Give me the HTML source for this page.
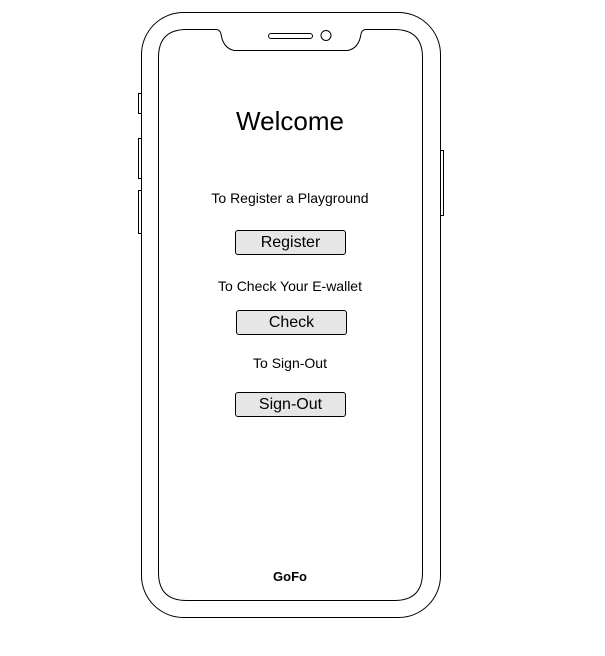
<!DOCTYPE html>
<html><head><meta charset="utf-8"><style>
html,body{margin:0;padding:0;background:#fff;width:605px;height:656px;overflow:hidden;font-family:"Liberation Sans",Arial,sans-serif}
.t{position:absolute;left:0;width:580px;text-align:center;color:#000}
.b{position:absolute;width:111px;height:25px;background:#e6e6e6;border:1px solid #000;border-radius:3px;box-sizing:border-box;text-align:center;font-size:16px;line-height:23px}
</style></head><body>
<svg width="605" height="656" style="position:absolute;left:0;top:0" fill="none" stroke="#000" stroke-width="1">
<path d="M141.5 93.5h-3v20h3M141.5 138.5h-3v40h3M141.5 190.5h-3v43h3M440.5 150.5h3v65h-3"/>
<rect x="141.5" y="12.5" width="299" height="605" rx="42"/>
<path d="M186.5 29.5 H216 Q220 29.5 221 34 Q223 48 234 50.5 H348 Q359 48 361 34 Q362 29.5 366 29.5 H394.5 Q422.5 29.5 422.5 57.5 V572.5 Q422.5 600.5 394.5 600.5 H186.5 Q158.5 600.5 158.5 572.5 V57.5 Q158.5 29.5 186.5 29.5 Z"/>
<rect x="268.5" y="33.5" width="44" height="5" rx="2.5"/>
<circle cx="326" cy="35.5" r="5"/>
</svg>
<div class="t" style="top:106px;font-size:26px">Welcome</div>
<div class="t" style="top:190px;font-size:14px">To Register a Playground</div>
<div class="b" style="left:235px;top:230px">Register</div>
<div class="t" style="top:278px;font-size:14px">To Check Your E-wallet</div>
<div class="b" style="left:236px;top:310px">Check</div>
<div class="t" style="top:355px;font-size:14px">To Sign-Out</div>
<div class="b" style="left:235px;top:392px">Sign-Out</div>
<div class="t" style="top:569px;font-size:13px;font-weight:bold">GoFo</div>
</body></html>
